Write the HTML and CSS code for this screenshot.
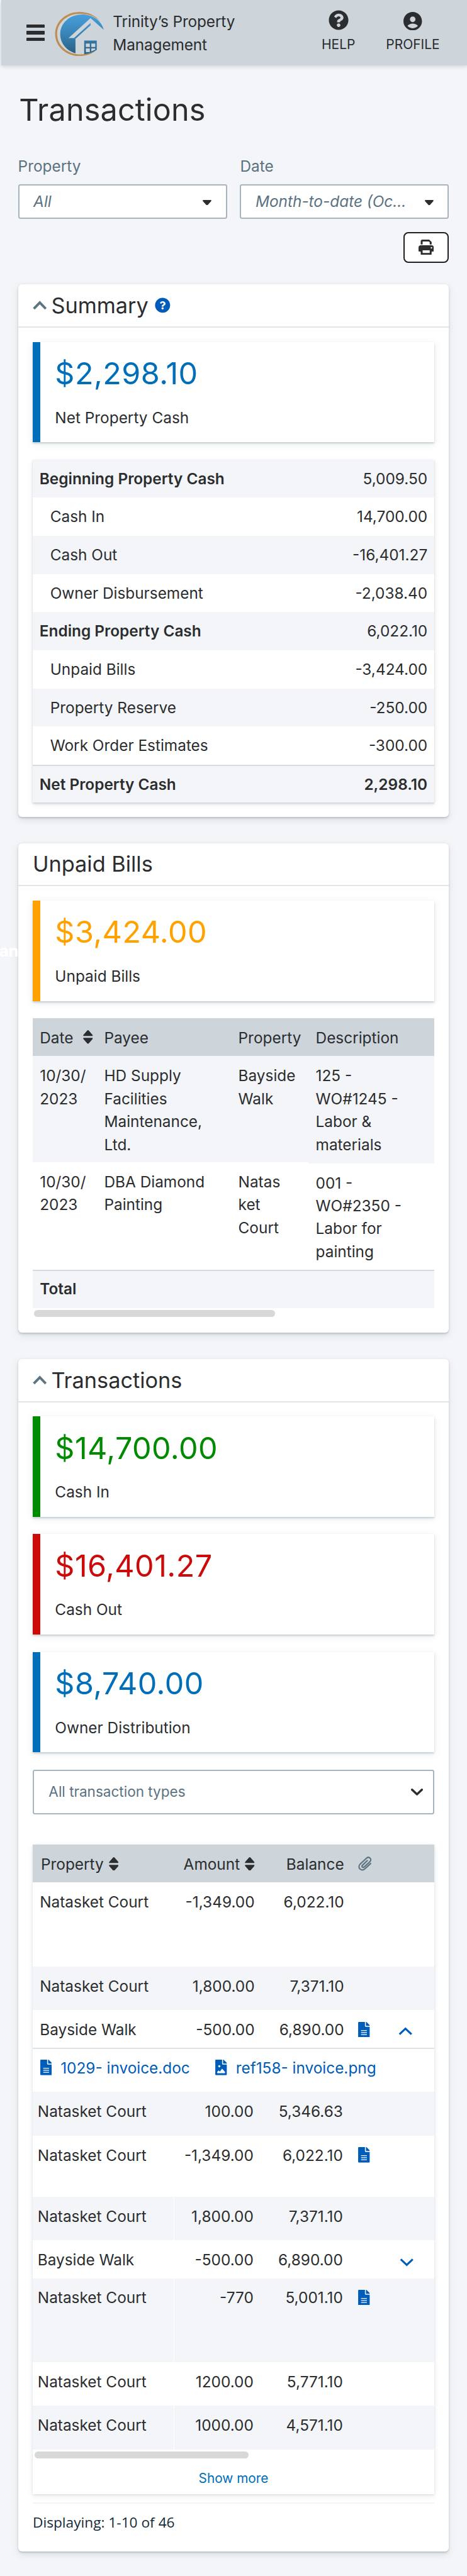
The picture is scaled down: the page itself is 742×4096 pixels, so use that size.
FILE: index.html
```html
<!DOCTYPE html>
<html lang="en">
<head>
<meta charset="utf-8">
<title>Transactions</title>
<link rel="stylesheet" href="styles.css">
</head>
<body>
<svg class="sprite" aria-hidden="true">
  <symbol id="i-sort" viewBox="0 0 18 25">
    <path d="M9 0c.6 0 1.1.3 1.5.8l6.8 7.8c.9 1.100.3 2.200-.9 2.200H1.600C.4 10.800-.200 9.700.700 8.600L7.500.800C7.900.300 8.400 0 9 0zM9 25c.6 0 1.100-.300 1.500-.800l6.800-7.800c.9-1.100.3-2.200-.9-2.200H1.600c-1.200 0-1.800 1.100-.9 2.200l6.800 7.800c.4.500.900.800 1.500.800z"/>
  </symbol>
  <symbol id="i-up" viewBox="0 0 26 17">
    <path d="M2 15 13 3.500l11 11.500" fill="none" stroke="currentColor" stroke-width="4.600"/>
  </symbol>
  <symbol id="i-help" viewBox="0 0 512 512">
    <path fill-rule="evenodd" d="M504 256c0 137-111 248-248 248S8 393 8 256C8 119 119 8 256 8s248 111 248 248zM262.700 90c-54.500 0-89.300 23-116.500 63.800-3.500 5.300-2.400 12.400 2.700 16.300l34.700 26.300c5.200 3.900 12.600 3 16.700-2.100 17.900-22.700 30.100-35.800 57.300-35.800 20.400 0 45.700 13.100 45.700 33 0 15-12.400 22.700-32.500 34C247.100 238.500 216 254.900 216 296v4c0 6.600 5.400 12 12 12h56c6.600 0 12-5.400 12-12v-1.300c0-28.500 83.200-29.600 83.200-106.700 0-58-60.200-102-116.500-102zM256 338c-25.400 0-46 20.600-46 46s20.600 46 46 46 46-20.600 46-46-20.600-46-46-46z"/>
  </symbol>
  <symbol id="i-doc" viewBox="0 0 384 512">
    <path fill-rule="evenodd" d="M224 136V0H24C10.700 0 0 10.700 0 24v464c0 13.300 10.700 24 24 24h336c13.300 0 24-10.700 24-24V160H248c-13.200 0-24-10.800-24-24zm64 292H96v-24h192zm0-64H96v-26h192zm0-68H96v-26h192zm96-174.100v6.100H256V0h6.100c6.400 0 12.500 2.500 17 7l97.900 98c4.500 4.500 7 10.600 7 16.900z"/>
  </symbol>
  <symbol id="i-img" viewBox="0 0 384 512">
    <path fill-rule="evenodd" d="M384 121.900V128H256V0h6.100a24 24 0 0 1 17 7l97.900 97.900a24 24 0 0 1 7 17zM248 160a24 24 0 0 1-24-24V0H24C10.700 0 0 10.700 0 24v464c0 13.300 10.700 24 24 24h336c13.300 0 24-10.700 24-24V160H248zM96 218a36 36 0 1 0 72 0 36 36 0 0 0-72 0zM320 448H64l.5-48.500L103.500 360.500c4.700-4.700 11.800-4.200 16.500.5L152 392l63.500-87.500c4.700-4.700 12.300-4.700 17 0L320 400v48z"/>
  </symbol>
</svg>

<header class="topbar">
  <div class="burger"><i></i><i></i><i></i></div>
  <svg class="logo" viewBox="0 0 270 244">
    <defs><linearGradient id="sky" gradientUnits="userSpaceOnUse" x1="0" y1="14" x2="0" y2="232"><stop offset="0" stop-color="#469fdb"/><stop offset=".45" stop-color="#3a86b9"/><stop offset="1" stop-color="#2a5f84"/></linearGradient></defs>
    <path fill="#be8d52" d="M250 53C224 17 182 0 136 0 60 0 2 54 2 121s58 122 134 122c38 0 72-12 94-34-24 16-54 25-88 25C72 234 13 186 13 121S70 10 138 10c46 0 84 12 112 43z"/>
    <path fill="url(#sky)" d="M270 99C256 46 208 14 150 14 82 14 30 62 30 123c0 48 34 90 84 105v-80l-8-4H76L197 34z"/>
    <path fill="url(#sky)" d="M106 144 197 61v13l-83 74z"/>
    <path fill="url(#sky)" fill-rule="evenodd" d="M162 158h69v51c-18 13-42 21-69 24zM171 174v19h22v-19zM201 174v19h22v-19zM171 201v21l22-1v-20zM201 201v16l22-9v-7z"/>
  </svg>
  <div class="brand">Trinity’s Property<br>Management</div>
  <nav class="actions">
    <div class="action"><svg class="ico-help"><use href="#i-help"/></svg><span>HELP</span></div>
    <div class="action"><svg class="ico-user" viewBox="2 2 20 20"><path d="M12 2C6.480 2 2 6.480 2 12s4.480 10 10 10 10-4.480 10-10S17.520 2 12 2zm0 5c1.660 0 3 1.340 3 3s-1.340 3-3 3-3-1.340-3-3 1.340-3 3-3zm0 12.600c-2.300 0-4.300-.9-5.600-2.600 1.200-1.600 3.500-2.500 5.600-2.500s4.400.9 5.600 2.500c-1.300 1.700-3.300 2.600-5.600 2.600z"/></svg><span>PROFILE</span></div>
  </nav>
</header>

<main class="page">
  <div class="stray">an</div>
  <h1>Transactions</h1>
  <div class="filters">
    <div class="field"><label>Property</label><div class="select"><em>All</em><svg class="caret" viewBox="0 0 16 10"><path d="M1.500 0h13c1.300 0 1.900 1.300 1 2.200L9.200 9.300c-.7.900-1.700.9-2.400 0L.5 2.200C-.4 1.300.2 0 1.500 0z"/></svg></div></div>
    <div class="field"><label>Date</label><div class="select"><em>Month-to-date (Oc...</em><svg class="caret" viewBox="0 0 16 10"><path d="M1.500 0h13c1.300 0 1.900 1.300 1 2.200L9.200 9.300c-.7.900-1.700.9-2.400 0L.5 2.200C-.4 1.300.2 0 1.500 0z"/></svg></div></div>
  </div>
  <button class="print"><svg viewBox="0 0 28 28"><path fill-rule="evenodd" d="M4 9V3c0-1.700 1.300-3 3-3h12.500L24 4.300V9h-3.500V5L18.800 3.500H7.500V9zM24 10.500c2.200 0 4 1.800 4 4v6c0 .8-.7 1.500-1.500 1.500H24v4.500c0 .9-.6 1.500-1.500 1.500h-17c-.9 0-1.500-.6-1.500-1.500V22H1.500C.7 22 0 21.300 0 20.500v-6c0-2.200 1.800-4 4-4zM7.500 19.500v5h13v-5zM23.700 13.700a1.400 1.400 0 1 0 0 2.800 1.400 1.400 0 0 0 0-2.800z"/></svg></button>

  <section class="card">
    <div class="card-head"><svg class="chev"><use href="#i-up"/></svg><h2>Summary</h2><svg class="hint" viewBox="0 0 512 512"><circle cx="256" cy="256" r="248" /><path fill="#fff" transform="translate(51 51) scale(.8)" d="M262.700 90c-54.500 0-89.300 23-116.500 63.800l37.400 42.600 16.700-2.100c17.900-22.700 30.100-35.800 57.300-35.800 20.400 0 45.700 13.100 45.700 33 0 15-12.400 22.700-32.500 34C247.100 238.500 216 254.900 216 312h80v-13.300c0-28.500 83.200-29.600 83.200-106.700 0-58-60.200-102-116.500-102zM256 338c-25.400 0-46 20.600-46 46s20.600 46 46 46 46-20.600 46-46-20.600-46-46-46z"/></svg></div>
    <div class="card-body">
      <div class="kpi blue"><strong>$2,298.10</strong><span>Net Property Cash</span></div>
      <div class="sums">
        <div class="sum head"><b>Beginning Property Cash</b><span>5,009.50</span></div>
        <div class="sum"><span>Cash In</span><span>14,700.00</span></div>
        <div class="sum"><span>Cash Out</span><span>-16,401.27</span></div>
        <div class="sum"><span>Owner Disbursement</span><span>-2,038.40</span></div>
        <div class="sum head"><b>Ending Property Cash</b><span>6,022.10</span></div>
        <div class="sum"><span>Unpaid Bills</span><span>-3,424.00</span></div>
        <div class="sum"><span>Property Reserve</span><span>-250.00</span></div>
        <div class="sum"><span>Work Order Estimates</span><span>-300.00</span></div>
        <div class="sum head total"><b>Net Property Cash</b><b>2,298.10</b></div>
      </div>
    </div>
  </section>

  <section class="card">
    <div class="card-head"><h2>Unpaid Bills</h2></div>
    <div class="card-body bills-body">
      <div class="kpi orange"><strong>$3,424.00</strong><span>Unpaid Bills</span></div>
      <div class="bills">
        <div class="bill bill-head"><div>Date <svg class="sort"><use href="#i-sort"/></svg></div><div>Payee</div><div>Property</div><div>Description</div></div>
        <div class="bill first"><div>10/30/<br>2023</div><div>HD Supply<br>Facilities<br>Maintenance,<br>Ltd.</div><div>Bayside<br>Walk</div><div class="desc">125 -<br>WO#1245 -<br>Labor &amp;<br>materials</div></div>
        <div class="bill second"><div>10/30/<br>2023</div><div>DBA Diamond<br>Painting</div><div>Natas<br>ket<br>Court</div><div class="desc">001 -<br>WO#2350 -<br>Labor for<br>painting</div></div>
        <div class="bill-total"><b>Total</b></div>
      </div>
      <div class="scroll bills-scroll"></div>
    </div>
  </section>

  <section class="card tx-card">
    <div class="card-head"><svg class="chev"><use href="#i-up"/></svg><h2>Transactions</h2></div>
    <div class="card-body">
      <div class="kpi green"><strong>$14,700.00</strong><span>Cash In</span></div>
      <div class="kpi red"><strong>$16,401.27</strong><span>Cash Out</span></div>
      <div class="kpi blue"><strong>$8,740.00</strong><span>Owner Distribution</span></div>
      <div class="type-select"><span>All transaction types</span><svg viewBox="0 0 22 13"><path d="m2 2 9 8.500L20 2" fill="none" stroke="#2b2d2f" stroke-width="4" stroke-linecap="round" stroke-linejoin="round"/></svg></div>
      <div class="txs">
        <div class="tx tx-head"><div>Property<svg class="sort"><use href="#i-sort"/></svg></div><div>Amount<svg class="sort"><use href="#i-sort"/></svg></div><div>Balance</div><div><svg class="clip" viewBox="0 0 26 28"><path d="M17.500 8.500 8.300 17.300c-1.100 1.100-1.100 2.600-.2 3.500.9.900 2.400.9 3.500-.1L22.400 10.500c2.200-2.100 2.200-5 .4-6.900-1.900-1.800-4.800-1.800-7 .3L4.200 14.700c-3.100 3-3.200 7.100-.7 9.700 2.600 2.500 6.700 2.400 9.800-.6l10.500-9.800" fill="none" stroke="#5d7483" stroke-width="2.700" stroke-linecap="round"/></svg></div></div>
        <div class="tx r1"><div>Natasket Court</div><div>-1,349.00</div><div>6,022.10</div></div>
        <div class="tx r2 grey"><div>Natasket Court</div><div>1,800.00</div><div>7,371.10</div></div>
        <div class="tx r3"><div>Bayside Walk</div><div>-500.00</div><div>6,890.00</div><div><svg class="doc"><use href="#i-doc"/></svg><svg class="toggle" viewBox="0 0 26 15"><path d="M2 13.500 13 3l11 10.500"/></svg></div></div>
        <div class="files"><a><svg class="doc"><use href="#i-doc"/></svg>1029- invoice.doc</a><a><svg class="doc"><use href="#i-img"/></svg>ref158- invoice.png</a></div>
        <div class="tx in r4 grey"><div>Natasket Court</div><div>100.00</div><div>5,346.63</div></div>
        <div class="tx in r5"><div>Natasket Court</div><div>-1,349.00</div><div>6,022.10</div><div><svg class="doc"><use href="#i-doc"/></svg></div></div>
        <div class="tx in r6 grey split"><div>Natasket Court</div><div>1,800.00</div><div>7,371.10</div></div>
        <div class="tx in r7"><div>Bayside Walk</div><div>-500.00</div><div>6,890.00</div><div><svg class="toggle down" viewBox="0 0 26 15"><path d="m2 1.500 11 10.500L24 1.500"/></svg></div></div>
        <div class="tx in r8 grey split"><div>Natasket Court</div><div>-770</div><div>5,001.10</div><div><svg class="doc"><use href="#i-doc"/></svg></div></div>
        <div class="tx in r9"><div>Natasket Court</div><div>1200.00</div><div>5,771.10</div></div>
        <div class="tx in r9 grey split"><div>Natasket Court</div><div>1000.00</div><div>4,571.10</div></div>
        <div class="scroll txs-scroll"></div>
        <a class="more">Show more</a>
      </div>
      <p class="count">Displaying: 1-10 of 46</p>
    </div>
  </section>
</main>
</body>
</html>
```
FILE: styles.css
```css
/* 1rem is ten design pixels */
html { font-size: 8.6633px; }
* { box-sizing: border-box; margin: 0; padding: 0; }
body {
  background: #f4f5f8;
  color: #2b2d2f;
  font: 400 2.815rem/4.2rem Inter, "Liberation Sans", sans-serif;
  overflow: hidden;
}
svg { display: block; fill: currentColor; flex: none; }
b { font-weight: 600; }
.sprite { position: absolute; width: 0; height: 0; }

.topbar {
  height: 12rem;
  margin-left: .2rem;
  padding: 0 5rem 0 4.65rem;
  background: #cdd4da;
  box-shadow: 0 .2rem .8rem rgba(60, 80, 100, .22);
  display: flex;
  align-items: flex-start;
}
.burger { display: grid; gap: .6rem; padding-top: 4.5rem; width: 3.35rem; }
.burger i { height: .6rem; border-radius: .1rem; background: #2b2d2f; }
.logo { width: 9rem; height: 8.13rem; margin: 2.2rem 0 0 1.8rem; }
.brand { margin: 1.9rem 0 0 1.7rem; letter-spacing: -.015rem; }
.actions { display: flex; margin-left: auto; gap: 5.65rem; font-size: 2.42rem; line-height: 3.6rem; }
.action { display: flex; flex-direction: column; align-items: center; }
.action span { margin-top: .75rem; }
.ico-help { width: 3.7rem; height: 3.7rem; margin-top: 1.85rem; }
.ico-user { width: 3.4rem; height: 3.4rem; margin-top: 2.15rem; }

.page { padding: 5.15rem 3.4rem 0; position: relative; }
.stray { position: absolute; left: -.15rem; top: 160.5rem; color: #fff; font-size: 3rem; font-weight: 700; letter-spacing: -.05rem; }
h1 { font-size: 5.6rem; line-height: 6rem; font-weight: 400; margin-left: .1rem; letter-spacing: .02rem; }
.filters { display: flex; gap: 2.4rem; margin: 5.2rem -.1rem 2.4rem; }
.field { flex: 1; min-width: 0; color: #5b7282; }
.field label { display: block; margin-bottom: 1.25rem; }
.select {
  height: 6.4rem;
  border: .24rem solid #a7b5bf;
  border-radius: .4rem;
  background: #fff;
  padding: 0 2.6rem;
  display: flex;
  align-items: center;
  justify-content: space-between;
}
.caret { width: 1.6rem; height: 1rem; color: #2b2d2f; margin-top: .3rem; }
.print {
  display: grid;
  place-items: center;
  width: 8.4rem;
  height: 5.6rem;
  margin: 0 -.1rem 4rem auto;
  border: .24rem solid #1d1f21;
  border-radius: .9rem;
  background: #fff;
  color: #2b2d2f;
}
.print svg { width: 2.8rem; height: 2.8rem; }

.card { background: #fff; border-radius: .7rem; margin-bottom: 4.8rem; box-shadow: 0 .2rem .3rem rgba(90, 110, 125, .3), 0 .5rem 1.4rem rgba(90, 110, 125, .16); }
.card-head { height: 7.95rem; border-bottom: .25rem solid #e0e6ea; padding: 0 2.6rem; display: flex; align-items: center; }
h2 { font-size: 3.96rem; font-weight: 400; line-height: 4.8rem; }
.chev { width: 2.6rem; height: 1.7rem; margin-right: .8rem; color: #5d7483; }
.hint { width: 2.85rem; height: 2.85rem; margin-left: 1.2rem; color: #005cb9; }
.card-body { padding: 2.6rem; }

.kpi {
  height: 18.45rem;
  border-left: 1.4rem solid currentColor;
  padding: 2.8rem 0 0 2.7rem;
  box-shadow: 0 .2rem .3rem rgba(90, 110, 125, .28), 0 .4rem 1.2rem rgba(90, 110, 125, .14);
  margin-bottom: 3.15rem;
}
.kpi strong { display: block; font-size: 5.6rem; line-height: 6rem; font-weight: 400; letter-spacing: .05rem; }
.kpi span { display: block; margin-top: 2.97rem; color: #2b2d2f; }
.blue { color: #006eb8; }
.orange { color: #ffa200; }
.green { color: #008a00; }
.red { color: #cc0a0a; }

.sums { box-shadow: 0 .2rem .3rem rgba(90, 110, 125, .25), 0 .3rem 1rem rgba(90, 110, 125, .12); }
.sum { height: 7rem; padding: 0 1.25rem 0 3.2rem; display: flex; align-items: center; justify-content: space-between; background: #fff; }
.sum:nth-child(odd) { background: #f4f5f8; }
.sum.head { padding-left: 1.25rem; }
.sum.total { border-top: .25rem solid #d3dae0; }

.bills-body { padding-bottom: 2.9rem; }
.bill { display: grid; grid-template-columns: 11.8rem 24.6rem 14.2rem 1fr; background: #fff; }
.bill > div { padding: 1.5rem 0 0 1.3rem; }
.bill-head { background: #cdd4da; height: 6.97rem; }
.bill-head > div { display: flex; gap: 1.8rem; }
.sort { width: 1.8rem; height: 2.5rem; margin-top: .75rem; }
.first { background: #f4f5f8; height: 19.45rem; }
.first .desc { background: #f4f5f8; height: 19.65rem; }
.second { height: 19.75rem; }
.second .desc { padding-top: 1.7rem; box-shadow: inset 0 .2rem #f4f5f8; }
.bill-total { height: 7.05rem; border-top: .25rem solid #d3dae0; background: #f4f5f8; padding: 1.2rem 1.3rem; }
.scroll { height: 1.3rem; border-radius: .65rem; background: #d8d8d8; }
.bills-scroll { width: 44.2rem; margin: .35rem 0 0 .25rem; }

.type-select {
  height: 8.2rem;
  border: .24rem solid #a7b5bf;
  border-radius: .4rem;
  padding: 0 1.9rem 0 2.7rem;
  margin-bottom: 5.6rem;
  display: flex;
  align-items: center;
  justify-content: space-between;
  color: #5b7282;
  font-size: 2.6rem;
}
.type-select svg { width: 2.2rem; height: 1.3rem; }
.txs { height: 119.25rem; box-shadow: 0 .1rem .3rem rgba(90, 110, 125, .16), 0 .3rem 1rem rgba(90, 110, 125, .14); }
.tx { display: grid; grid-template-columns: 25.9rem 14.8rem 16.4rem 1fr; background: #fff; }
.tx > div { padding-top: 1.5rem; text-align: right; }
.tx > div:first-child { padding-left: 1.3rem; text-align: left; }
.tx > div:nth-child(4) { padding: 2.1rem 0 0 2.6rem; display: flex; justify-content: flex-start; }
.tx.in > div:first-child { padding-left: .9rem; }
.tx.in > div:nth-child(2), .tx.in > div:nth-child(3) { position: relative; right: .2rem; }
.tx-head { background: #cdd4da; height: 6.95rem; }
.tx-head > div { display: flex; justify-content: flex-end; gap: .9rem; }
.tx-head > div:first-child { justify-content: flex-start; padding-left: 1.5rem; }
.grey { background: #f4f5f8; }
.split { background: linear-gradient(90deg, #f4f5f8 25.8rem, #fff 25.8rem, #fff 26rem, #f4f5f8 26rem); }
.clip { width: 2.5rem; height: 2.8rem; }
.doc { width: 2.15rem; height: 2.85rem; color: #005cb9; }
.toggle { width: 2.6rem; height: 1.5rem; margin: 1rem 0 0 5.25rem; fill: none; stroke: #005cb9; stroke-width: 3.6; }
.toggle.down { margin: 1.3rem 0 0 7.6rem; }
.r1 { height: 15.4rem; }
.r2 { height: 8.03rem; }
.r3 { height: 7.1rem; border-bottom: .25rem solid #dde4e8; }
.files { height: 7.9rem; padding: 1.35rem 1.35rem 0; display: flex; color: #005cb9; }
.files a { display: flex; width: 32.15rem; white-space: nowrap; }
.files .doc { margin: .65rem 1.6rem 0 0; }
.r4 { height: 8.02rem; }
.r5 { height: 11.2rem; }
.r6 { height: 7.97rem; }
.r7 { height: 7rem; }
.r8 { height: 15.42rem; }
.r9 { height: 8rem; }
.txs-scroll { width: 39.2rem; margin: .4rem 0 0 .4rem; }
.more { display: block; text-align: center; margin-top: 1.6rem; color: #006eb8; font-size: 2.4rem; }
.count { margin-top: 1.5rem; border-top: .24rem solid #f3f4f6; padding-top: 1.3rem; font: 400 2.62rem/4.2rem "Open Sans", "Noto Sans", sans-serif; color: #132b3a; height: 6.4rem; }
```
